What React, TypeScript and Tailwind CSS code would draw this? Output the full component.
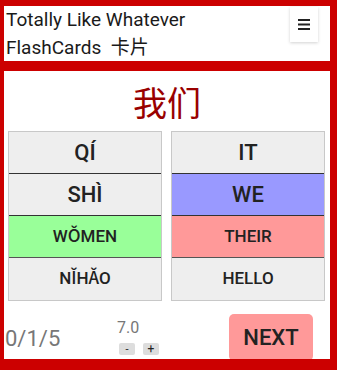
import React from "react";

const font = { fontFamily: "Roboto, 'Noto Sans CJK SC', sans-serif" };

function Cell({ text, bg, big, last, border }: { text: string; bg: string; big?: boolean; last?: boolean; border?: string }) {
  return (
    <div
      className={`h-[42px] flex items-center justify-center text-[#222] font-medium ${bg} ${big ? "text-[22px]" : "text-[17px]"} ${last ? "" : "border-b"} ${border ?? "border-[#333]"}`}
    >
      {text}
    </div>
  );
}

export default function App() {
  return (
    <div className="w-[337px] h-[370px] bg-[#cc0000] pl-[4px] pr-[7px] pt-[6px] overflow-hidden" style={font}>
      <div className="bg-white h-[55px] flex justify-between">
        <div className="pl-[2px] pt-[1px] text-[19px] leading-[26px] text-[#1a1a1a]">
          <div>Totally Like Whatever</div>
          <div>
            FlashCards&nbsp;&nbsp;<span style={{ fontFamily: "'Noto Sans CJK SC', sans-serif" }}>卡片</span>
          </div>
        </div>
        <div className="mt-[1px] mr-[12px] w-[28px] h-[35px] bg-white shadow-[0_1px_3px_rgba(0,0,0,0.18)] flex items-center justify-center">
          <svg width="12" height="11" viewBox="0 0 12 11">
            <rect x="0" y="0" width="12" height="2" fill="#222" />
            <rect x="0" y="4.5" width="12" height="2" fill="#222" />
            <rect x="0" y="9" width="12" height="2" fill="#222" />
          </svg>
        </div>
      </div>
      <div className="mt-[10px] bg-white h-[288px] overflow-hidden">
        <div
          className="h-[60px] flex items-center justify-center text-[34px] text-[#990000]"
          style={{ fontFamily: "'Noto Sans CJK SC', sans-serif" }}
        >
          我们
        </div>
        <div className="flex pl-[4px] pr-[5px] gap-[9px]">
          <div className="flex-1 border border-[#c8c8c8]">
            <Cell text="QÍ" bg="bg-[#eeeeee]" big />
            <Cell text="SHÌ" bg="bg-[#eeeeee]" big />
            <Cell text="WǑMEN" bg="bg-[#99ff99]" border="border-[#555]" />
            <Cell text="NǏHǍO" bg="bg-[#eeeeee]" last />
          </div>
          <div className="flex-1 border border-[#c8c8c8]">
            <Cell text="IT" bg="bg-[#eeeeee]" big />
            <Cell text="WE" bg="bg-[#9999ff]" big />
            <Cell text="THEIR" bg="bg-[#ff9999]" border="border-[#555]" />
            <Cell text="HELLO" bg="bg-[#eeeeee]" last />
          </div>
        </div>
        <div className="flex items-start">
          <div className="w-[113px] pl-[1px] mt-[25px] text-[22px] leading-[26px] text-[#777]">0/1/5</div>
          <div className="mt-[17px] flex flex-col items-start">
            <div className="text-[16px] leading-[19px] text-[#777]">7.0</div>
            <div className="flex gap-[8px] mt-[6px] ml-[2px]">
              <div className="w-[16px] h-[12px] bg-[#dddddd] rounded-[2px] flex items-center justify-center text-[11px] leading-none text-[#222]">-</div>
              <div className="w-[16px] h-[12px] bg-[#dddddd] rounded-[2px] flex items-center justify-center text-[12px] leading-none text-[#222]">+</div>
            </div>
          </div>
          <div className="ml-auto mr-[17px] mt-[13px] w-[84px] h-[47px] bg-[#ff9999] rounded-[5px] flex items-center justify-center text-[22px] font-medium text-[#222]">
            NEXT
          </div>
        </div>
      </div>
    </div>
  );
}
